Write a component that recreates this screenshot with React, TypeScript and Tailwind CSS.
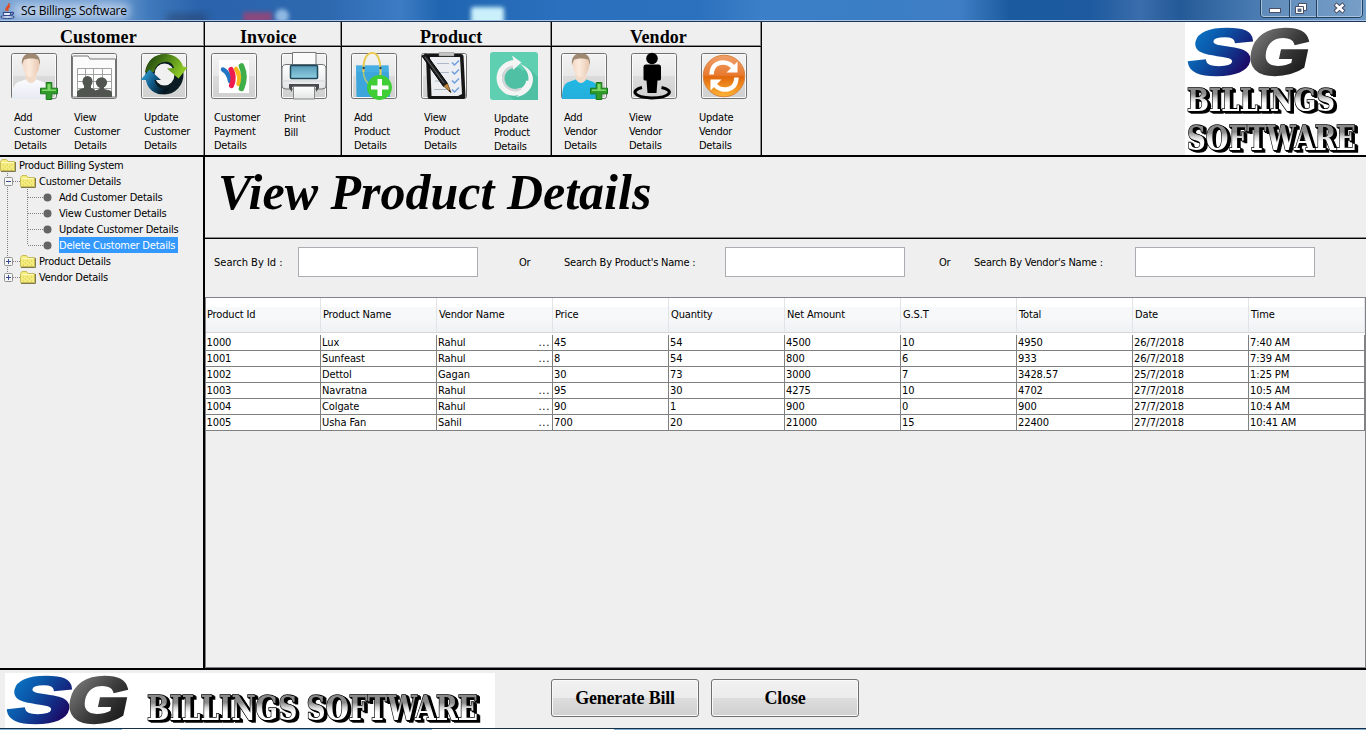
import React from "react";

const UI = "font-['DejaVu_Sans_Condensed','DejaVu_Sans',sans-serif] [font-stretch:condensed]";
const SERIF = "font-['Liberation_Serif',serif]";

function IconFrame({ id, children, bare }: { id: string; children: React.ReactNode; bare?: boolean }) {
  return (
    <svg width="48" height="48" viewBox="0 0 48 48" className="block shrink-0">
      <defs>
        <linearGradient id={id} x1="0" y1="0" x2="0" y2="1">
          <stop offset="0" stopColor="#f3f3f3" />
          <stop offset="0.5" stopColor="#e8e8e8" />
          <stop offset="0.5" stopColor="#dcdcdc" />
          <stop offset="1" stopColor="#cfcfcf" />
        </linearGradient>
      </defs>
      {!bare && (
        <>
          <rect x="1.5" y="1.5" width="45" height="45" rx="2" fill={"url(#" + id + ")"} stroke="#707070" />
          <rect x="2.5" y="2.5" width="43" height="43" rx="1" fill="none" stroke="#fafafa" />
        </>
      )}
      {children}
    </svg>
  );
}

function Person({ id, body, bodyDark }: { id: string; body: string; bodyDark: string }) {
  return (
    <IconFrame id={id}>
      <defs>
        <linearGradient id={id + "b"} x1="0" y1="0" x2="0" y2="1">
          <stop offset="0" stopColor={body} />
          <stop offset="1" stopColor={bodyDark} />
        </linearGradient>
        <linearGradient id={id + "f"} x1="0" y1="0" x2="1" y2="0">
          <stop offset="0" stopColor="#f3dac8" />
          <stop offset="0.4" stopColor="#fbeadc" />
          <stop offset="1" stopColor="#e8c8b0" />
        </linearGradient>
      </defs>
      <path d="M2 47C2 36 4 31 10 29.500L17 27H25L32 29.500C37 31 40 37 40 47Z" fill={"url(#" + id + "b)"} />
      <path d="M15.500 18H26.500V26.500C25 30 22.500 31 21 31C19 31 17 29.500 15.500 26.500Z" fill="#f2dac8" />
      <path d="M12.500 10C12.300 18 15.500 24.500 20.800 25C26.500 24.500 29.700 18 29.500 10C29 5 25 3 21 3C17 3 13 5 12.500 10Z" fill={"url(#" + id + "f)"} />
      <path d="M12 13C11 5 15 1.200 21 1.200C27 1.200 31 5 29.800 13C29 11 29 8.500 28 7.500C24 6 18 6 14.300 7.500C13.300 9 12.800 11 12 13Z" fill="#a08973" />
      <path d="M36.200 30.500H41.800V36.200H47.500V41.800H41.800V47.500H36.200V41.800H30.500V36.200H36.200Z" fill="#2f9a2a" stroke="#1b7a1b" />
      <path d="M37.500 32H40.500V37.500H46V39H32V37.500H37.500Z" fill="#7fd868" />
    </IconFrame>
  );
}

function FolderPeople() {
  return (
    <IconFrame id="fp">
      <path d="M2.500 45V5Q2.500 4 3.500 4H18L20 7H45.500V45Z" fill="#fbfbfb" stroke="#777" />
      <path d="M7.500 16.500H41.500V44.500H7.500ZM7.500 22.500H41.500M7.500 29.500H41.500M7.500 36.500H41.500M15.500 16.500V44M23.500 16.500V44M32.500 16.500V44" fill="#fff" stroke="#a2a2a2" />
      <g fill="#50554f">
        <ellipse cx="17.500" cy="29.500" rx="5" ry="5.500" />
        <path d="M7 45V41C7 37.500 11 37 14 36V31H21V36C24 37 26 37.500 26 41V45Z" />
        <ellipse cx="31.500" cy="30.500" rx="5.600" ry="5.200" />
        <path d="M24 45V41C24 38 27 38 29.500 37V32H34V37C38 38 42 38 42 41V45Z" />
      </g>
    </IconFrame>
  );
}

function SyncDark() {
  return (
    <IconFrame id="sd">
      <defs>
        <linearGradient id="sdg" x1="0" y1="0" x2="1" y2="0.4">
          <stop offset="0" stopColor="#14320a" />
          <stop offset="0.5" stopColor="#4c7f17" />
          <stop offset="1" stopColor="#8cc926" />
        </linearGradient>
        <linearGradient id="sdb" x1="0" y1="0" x2="1" y2="0.5">
          <stop offset="0" stopColor="#3bb2e8" />
          <stop offset="0.5" stopColor="#125f8e" />
          <stop offset="1" stopColor="#04141f" />
        </linearGradient>
      </defs>
      <ellipse cx="24.500" cy="22.500" rx="14.500" ry="15.500" fill="#f0f0f0" stroke="#0b1d22" strokeWidth="9" />
      <path d="M5 20C7 8 15 2 25 2C34 2 41 7 43 14.500L47.500 15.500L38.500 26.500L27 16.500L34 16C32 10 28 9.500 24 10C17 11 15 16 14 20Z" fill="url(#sdg)" />
      <path d="M0.500 28L9.500 17.500L21 28H14.500C16 36 22 38 30 35.500C25 43.500 20 43 16 41C10 38.500 7 34 6 28Z" fill="url(#sdb)" />
    </IconFrame>
  );
}

function Wallet() {
  return (
    <IconFrame id="wa">
      <rect x="9" y="8" width="30" height="33" fill="#fff" />
      <g fill="none" strokeLinecap="round">
        <path d="M26 17Q31 24 28.500 32" stroke="#f8b71b" strokeWidth="4.500" />
        <path d="M31.500 14Q36.500 25 31.500 36.500" stroke="#3fae49" strokeWidth="5.600" />
        <path d="M13 17.500Q19 21 20 29" stroke="#2177c4" strokeWidth="4.500" />
        <path d="M21 17.500Q25 25 21.500 33.500" stroke="#ee1b4c" strokeWidth="5.200" />
      </g>
    </IconFrame>
  );
}

function Printer() {
  return (
    <IconFrame id="pr">
      <defs>
        <linearGradient id="prp" x1="0" y1="0" x2="0" y2="1">
          <stop offset="0" stopColor="#5799b5" />
          <stop offset="1" stopColor="#8fd0e2" />
        </linearGradient>
        <linearGradient id="prw" x1="0" y1="0" x2="0" y2="1">
          <stop offset="0" stopColor="#fff" />
          <stop offset="1" stopColor="#e2e4e5" />
        </linearGradient>
      </defs>
      <path d="M12.500 13V0.500H36V13Z" fill="#fafafa" stroke="#777" />
      <path d="M2 17Q2 12.500 6 12.500H42Q46 12.500 46 17V34Q46 37 42 37H6Q2 37 2 34Z" fill="url(#prw)" stroke="#707477" />
      <path d="M2 29H46" stroke="#d0d4d5" />
      <rect x="10.500" y="13.500" width="27" height="13" rx="1" fill="url(#prp)" stroke="#1d4658" strokeWidth="1.500" />
      <path d="M9 32H39V36L36 40V35H12V40L9 36Z" fill="#484c4e" />
      <path d="M13.500 34.500H34.500V47H13.500Z" fill="url(#prw)" stroke="#888" />
    </IconFrame>
  );
}

function Bag() {
  return (
    <IconFrame id="bg">
      <path d="M6 13.500H38.500L40 45H6.500Z" fill="#3ba5dc" />
      <path d="M6 13.500H38.500V20H6Z" fill="#4db4e6" opacity="0.600" />
      <path d="M13.500 15V22Q15 30 20 32.500" fill="none" stroke="#a9c878" strokeWidth="1.500" />
      <path d="M13.500 20C13 8 16 1 22.500 1C28 1 31 8 30.500 24" fill="none" stroke="#e8cb52" strokeWidth="2" />
      <circle cx="13.700" cy="16" r="1.200" fill="#246" />
      <circle cx="30.500" cy="16" r="1.200" fill="#246" />
      <circle cx="29.500" cy="35.500" r="12.400" fill="#3fce35" />
      <path d="M27.500 27H32V33.500H38.500V37.500H32V44H27.500V37.500H21V33.500H27.500Z" fill="#fff" />
    </IconFrame>
  );
}

function Clipboard() {
  return (
    <IconFrame id="cl">
      <path d="M6 4Q6 2 8 2H41Q43 2 43.500 4L45.500 44Q45.500 47 43 47H10Q7.500 47 7.500 44Z" fill="#161616" />
      <path d="M10 5H40L42 42L38 44H11.500Z" fill="#eceef1" />
      <path d="M19 0.500H34V4H19Z" fill="#c4c4c4" stroke="#888" strokeWidth="0.500" />
      <path d="M17 11.500H29M18 20.500H29M15 29H25M14 37.500H30" stroke="#aeb8c4" strokeWidth="1" />
      <path d="M32 10.500L34.500 13L39 8.500M32 19.500L34.500 22L39 17.500M32 28.500L34.500 31L39 26.500M32 37.500L34.500 40L39 35.500" fill="none" stroke="#6c9fe0" strokeWidth="1.400" />
      <path d="M2 4L6 2L27.500 31.500L23.500 34.500Z" fill="#1e1e20" stroke="#000" />
      <path d="M5 5L24 31" stroke="#777" strokeWidth="0.800" />
      <path d="M23.500 34L27.500 31.500L31 40.500Z" fill="#c4883f" stroke="#513413" strokeWidth="0.700" />
      <path d="M29.500 38L31 40.500L28.500 39Z" fill="#000" />
    </IconFrame>
  );
}

function RefreshTeal() {
  return (
    <IconFrame id="rt" bare>
      <rect width="48" height="48" rx="3" fill="#5fcfb2" />
      <path d="M31 8L48 25V48H24L10 37L38 15Z" fill="#4fc0a3" />
      <circle cx="24" cy="26" r="11" fill="#4fc0a3" />
      <path d="M24.500 11A15 15 0 1 0 39 29" fill="none" stroke="#f4f4f4" strokeWidth="5.500" />
      <path d="M25.500 14.500A11.800 11.800 0 1 0 31 36.500" fill="none" stroke="#d3d5d7" strokeWidth="2.500" />
      <path d="M30 12C38 15 43 20 43 27C43 36 36 44 26 45C34 40 38 34 38.500 27C38.500 20 35 16 30 12Z" fill="#f4f4f4" />
      <path d="M22 3.500L31.500 10.500L23 18V14.500L21 8.500H23.500Z" fill="#f4f4f4" />
    </IconFrame>
  );
}

function Standing() {
  return (
    <IconFrame id="st">
      <path d="M12 35.500C1 38 2 45 21.500 46C42 45.500 44 38 31.500 35.500" fill="none" stroke="#000" strokeWidth="3" />
      <circle cx="22" cy="6.500" r="5.800" />
      <path d="M13.500 15Q13.500 12.500 16 12.500H28.500Q31 12.500 31 15V27Q31 28.500 29 28.500H27.500L26.500 41H17.500L16.500 28.500H15Q13.500 28.500 13.500 27Z" />
    </IconFrame>
  );
}

function SyncOrange() {
  return (
    <IconFrame id="so">
      <defs>
        <linearGradient id="sog" x1="0" y1="0" x2="0" y2="1">
          <stop offset="0" stopColor="#f0a06a" />
          <stop offset="0.480" stopColor="#e87a30" />
          <stop offset="0.520" stopColor="#e2680c" />
          <stop offset="1" stopColor="#fdb436" />
        </linearGradient>
      </defs>
      <circle cx="24" cy="24" r="20.800" fill="url(#sog)" stroke="#d9843f" />
      <path d="M11.500 22.500C12 8 27 8 33 15M36.500 25.500C36 40 21 40 15 33" fill="none" stroke="#fff" strokeWidth="4.600" />
      <path d="M37.500 9.500V20.500H26.500ZM10.500 38.500V27.500H21.500Z" fill="#fff" />
    </IconFrame>
  );
}

function Tool({ icon, lines, cls, labelCls }: { icon: React.ReactNode; lines: string[]; cls: string; labelCls: string }) {
  return (
    <div className={"shrink-0 " + cls}>
      {icon}
      <div className={"whitespace-nowrap text-[11px] leading-[14px] tracking-[-0.250px] " + labelCls}>
        {lines.map((l) => (
          <div key={l}>{l}</div>
        ))}
      </div>
    </div>
  );
}

function Section({ title, cls, headCls, bodyCls, children }: { title: string; cls: string; headCls: string; bodyCls: string; children: React.ReactNode }) {
  return (
    <section className={"flex shrink-0 flex-col border-r border-black shadow-[inset_-1px_0_#8a8a8a] " + cls}>
      <h2 className={"h-[25px] shrink-0 whitespace-nowrap border-b border-black pt-[6px] text-[18px] font-bold leading-[18px] tracking-[0.100px] shadow-[inset_0_-1px_#8a8a8a] " + SERIF + " " + headCls}>
        {title}
      </h2>
      <div className={"flex pt-[5px] " + bodyCls}>{children}</div>
    </section>
  );
}

function SgMark({ id }: { id: string }) {
  return (
    <>
      <defs>
        <linearGradient id={id + "s"} x1="0" y1="0" x2="1" y2="0.600">
          <stop offset="0" stopColor="#0a7fd0" />
          <stop offset="0.450" stopColor="#0b56a8" />
          <stop offset="1" stopColor="#1b0a66" />
        </linearGradient>
        <linearGradient id={id + "g"} x1="0" y1="0" x2="1" y2="0.800">
          <stop offset="0" stopColor="#8a8a8a" />
          <stop offset="0.600" stopColor="#3a3a3a" />
          <stop offset="1" stopColor="#161616" />
        </linearGradient>
      </defs>
      <g transform="translate(10 0) skewX(-12)" className="font-['Liberation_Sans',sans-serif] font-bold [font-stretch:normal]" fontSize="64" letterSpacing="0" strokeWidth="3">
        <text x="-3" y="46.500" textLength="64" lengthAdjust="spacingAndGlyphs" fill={"url(#" + id + "s)"} stroke={"url(#" + id + "s)"}>S</text>
        <text x="57" y="46.500" textLength="61" lengthAdjust="spacingAndGlyphs" fill={"url(#" + id + "g)"} stroke={"url(#" + id + "g)"}>G</text>
      </g>
    </>
  );
}

function Western({ id, x, y, w, size, children }: { id: string; x: number; y: number; w: number; size: number; children: string }) {
  return (
    <>
      <defs>
        <linearGradient id={id} x1="0" y1="0" x2="0" y2="1">
          <stop offset="0.350" stopColor="#8a8a8a" />
          <stop offset="0.480" stopColor="#d8d8d8" />
          <stop offset="0.600" stopColor="#ffffff" />
        </linearGradient>
      </defs>
      <text
        x={x}
        y={y}
        textLength={w}
        lengthAdjust="spacingAndGlyphs"
        fontSize={size}
        letterSpacing="0"
        fill={"url(#" + id + ")"}
        stroke="#000"
        strokeWidth="1.600"
        paintOrder="stroke"
        className="font-['DejaVu_Serif',serif] font-bold [filter:drop-shadow(1px_1px_0_#000)_drop-shadow(2px_1px_0_#000)] [font-stretch:normal]"
      >
        {children}
      </text>
    </>
  );
}

function Folder() {
  return (
    <svg width="16" height="13" viewBox="0 0 16 13" className="block shrink-0">
      <path d="M0.500 11.500V2.500L2 0.500H6.500L8 2.500H14.500V11.500Z" fill="#f3ec7c" stroke="#c9bd5b" />
      <path d="M1 12.500H15.500V3" fill="none" stroke="#7f7a4e" />
      <path d="M1.500 3.500H13.500" stroke="#fffbc0" />
      <path d="M3 6h1M7 6h1M11 6h1M5 8h1M9 8h1M3 10h1M7 10h1M11 10h1" stroke="#d6c94e" />
    </svg>
  );
}

function Branch({ open, last }: { open: boolean; last?: boolean }) {
  return (
    <svg width="20" height="16" viewBox="0 0 20 16" className="block shrink-0">
      <path d={last ? "M7.500 0V8" : "M7.500 0V16"} stroke="#808080" strokeDasharray="1 1" />
      <path d="M13 8.500H20" stroke="#808080" strokeDasharray="1 1" />
      <rect x="4.500" y="4.500" width="8" height="8" rx="1" fill="#f6f6f6" stroke="#919191" />
      <path d={open ? "M6 8.500H11" : "M6 8.500H11M8.500 6V11"} stroke="#3c4f9f" />
    </svg>
  );
}

function Leaf({ label, last, selected }: { label: string; last?: boolean; selected?: boolean }) {
  return (
    <li className="flex h-4 items-center">
      <svg width="58" height="16" viewBox="0 0 58 16" className="block shrink-0">
        <path d="M7.500 0V16" stroke="#808080" strokeDasharray="1 1" />
        <path d={last ? "M27.500 0V8" : "M27.500 0V16"} stroke="#808080" strokeDasharray="1 1" />
        <path d="M28 8.500H43" stroke="#808080" strokeDasharray="1 1" />
        <circle cx="47.500" cy="8.500" r="4" fill="#646464" />
      </svg>
      <span className={selected ? "ml-px h-[16px] w-[119px] bg-[#3399ff] pt-px leading-[15px] text-white" : "ml-px pt-px leading-[15px]"}>{label}</span>
    </li>
  );
}

function Group({ label, open, last }: { label: string; open: boolean; last?: boolean }) {
  return (
    <li className="flex h-4 items-center">
      <Branch open={open} last={last} />
      <Folder />
      <span className="ml-[3px] pt-px leading-[15px]">{label}</span>
    </li>
  );
}

const COLUMNS = ["Product Id", "Product Name", "Vendor Name", "Price", "Quantity", "Net Amount", "G.S.T", "Total", "Date", "Time"];
const ROWS = [
  ["1000", "Lux", "Rahul", "45", "54", "4500", "10", "4950", "26/7/2018", "7:40 AM"],
  ["1001", "Sunfeast", "Rahul", "8", "54", "800", "6", "933", "26/7/2018", "7:39 AM"],
  ["1002", "Dettol", "Gagan", "30", "73", "3000", "7", "3428.57", "25/7/2018", "1:25 PM"],
  ["1003", "Navratna", "Rahul", "95", "30", "4275", "10", "4702", "27/7/2018", "10:5 AM"],
  ["1004", "Colgate", "Rahul", "90", "1", "900", "0", "900", "27/7/2018", "10:4 AM"],
  ["1005", "Usha Fan", "Sahil", "700", "20", "21000", "15", "22400", "27/7/2018", "10:41 AM"],
];
const GRID = "grid grid-cols-[115px_repeat(8,116px)_116px]";

function Field() {
  return <input className="h-[30px] w-[180px] shrink-0 border border-[#abadb3] bg-white px-1 outline-none" />;
}

function PushButton({ children }: { children: string }) {
  return (
    <button className={"h-[38px] w-[148px] rounded-[3px] border border-[#707070] bg-[linear-gradient(#f2f2f2,#ebebeb_50%,#dddddd_50%,#cfcfcf)] text-[18px] font-bold leading-none shadow-[inset_0_0_0_1px_#fafafa] " + SERIF}>
      {children}
    </button>
  );
}

function TitleBar() {
  return (
    <header className="relative flex h-[22px] shrink-0 justify-between overflow-hidden border-b border-[#1d3556] bg-[linear-gradient(90deg,#7ba4d4_0,#6f9cd1_110px,#3f79bb_150px,#2a63ab_200px,#2e69b0_330px,#3c7cc4_400px,#2065b0_440px,#2a70be_560px,#2c71bd_700px,#3b7fc8_760px,#3a7ec6_860px,#3f7ec4_960px,#1c5a9f_1010px,#1d5a9f_1090px,#3a6dab_1140px,#235a97_1180px,#4779b0_1250px,#6f9ac6_1366px)] shadow-[inset_0_-1px_#a9c3e4]">
      <svg width="620" height="20" viewBox="0 0 620 20" className="absolute left-0 top-0">
        <defs>
          <filter id="soft" x="-50%" y="-80%" width="200%" height="260%">
            <feGaussianBlur stdDeviation="4" />
          </filter>
          <filter id="soft2" x="-50%" y="-80%" width="200%" height="260%">
            <feGaussianBlur stdDeviation="2" />
          </filter>
        </defs>
        <rect x="14" y="4" width="115" height="14" fill="#c6d8ee" filter="url(#soft)" opacity="0.800" />
        <rect x="167" y="15" width="40" height="7" fill="#26324f" filter="url(#soft)" opacity="0.600" />
        <ellipse cx="282" cy="16" rx="7" ry="7" fill="#a9cdf0" filter="url(#soft2)" opacity="0.800" />
        <rect x="243" y="12" width="29" height="11" fill="#a8406f" filter="url(#soft2)" opacity="0.750" />
        <rect x="471" y="7" width="33" height="18" rx="3" fill="#c9f0fb" filter="url(#soft2)" />
      </svg>
      <div className="relative flex">
        <svg width="16" height="16" viewBox="0 0 16 16" className="mt-[3px] block">
          <path d="M9 0C10 3 5 4 6 8M10 3C8 4 7 5 8 8" fill="none" stroke="#e04a1c" strokeWidth="1.500" />
          <path d="M3 9.500H11L10 12.500H4Z" fill="#e6ecfa" stroke="#2f4488" />
          <path d="M11 9.500C15 8.500 14 12 10.500 12" fill="none" stroke="#2f4488" strokeWidth="1.200" />
          <ellipse cx="7.500" cy="14" rx="7" ry="1.500" fill="#c9d5f1" stroke="#2f4488" />
        </svg>
        <span className="ml-[5px] mt-[3px] whitespace-nowrap font-['Open_Sans','Noto_Sans',sans-serif] text-[12px] leading-4 tracking-[-0.250px] text-black [font-stretch:normal]">SG Billings Software</span>
      </div>
      <svg width="106" height="20" viewBox="0 0 106 20" className="relative block">
        <path d="M0.500 0V14Q0.500 17.500 4 17.500H99Q102.500 17.500 102.500 14V0" fill="#86a8cc" fillOpacity="0.350" stroke="#22405f" />
        <path d="M1.500 0V14Q1.500 16.500 4 16.500H99Q101.500 16.500 101.500 14V0M30.500 0V16M57.500 0V16" fill="none" stroke="#b6cde4" strokeOpacity="0.800" />
        <path d="M29.500 0V17M56.500 0V17" stroke="#22405f" />
        <rect x="9.500" y="8.500" width="11" height="4" fill="#fff" stroke="#4a4f66" />
        <path d="M38.500 3.500H46.500V10.500H38.500Z" fill="#fff" stroke="#4a4f66" />
        <path d="M35.500 6.500H43.500V13.500H35.500Z" fill="#fff" stroke="#4a4f66" />
        <rect x="38" y="9" width="3" height="2.500" fill="#5c7ba0" stroke="#4a4f66" strokeWidth="0.800" />
        <path d="M75 4L84 12M84 4L75 12" stroke="#4a4f66" strokeWidth="4.500" />
        <path d="M75.700 4.500L83.300 11.500M83.300 4.500L75.700 11.500" stroke="#fff" strokeWidth="2.400" />
      </svg>
    </header>
  );
}

export default function App() {
  return (
    <div className={"flex h-[730px] w-[1366px] flex-col overflow-hidden bg-[#efefef] text-[11px] tracking-[-0.220px] text-black " + UI}>
      <TitleBar />

      <div className="flex h-[135px] shrink-0 border-b-2 border-black">
        <Section title="Customer" cls="w-[205px]" headCls="pl-[60px]" bodyCls="pl-[10px]">
          <Tool icon={<Person id="pc" body="#fbfcfe" bodyDark="#e6eaf2" />} lines={["Add", "Customer", "Details"]} cls="w-[60px]" labelCls="pl-1 pt-[11px]" />
          <Tool icon={<FolderPeople />} lines={["View", "Customer", "Details"]} cls="w-[70px]" labelCls="pl-1 pt-[11px]" />
          <Tool icon={<SyncDark />} lines={["Update", "Customer", "Details"]} cls="w-[60px]" labelCls="pl-1 pt-[11px]" />
        </Section>
        <Section title="Invoice" cls="w-[137px]" headCls="pl-[35px]" bodyCls="pl-[5px]">
          <Tool icon={<Wallet />} lines={["Customer", "Payment", "Details"]} cls="w-[70px]" labelCls="pl-1 pt-[11px]" />
          <Tool icon={<Printer />} lines={["Print", "Bill"]} cls="w-[50px]" labelCls="pl-1 pt-[12px]" />
        </Section>
        <Section title="Product" cls="w-[210px]" headCls="pl-[78px]" bodyCls="pl-[8px]">
          <Tool icon={<Bag />} lines={["Add", "Product", "Details"]} cls="w-[70px]" labelCls="pl-1 pt-[11px]" />
          <Tool icon={<Clipboard />} lines={["View", "Product", "Details"]} cls="w-[70px]" labelCls="pl-1 pt-[11px]" />
          <Tool icon={<RefreshTeal />} lines={["Update", "Product", "Details"]} cls="w-[50px]" labelCls="pl-1 pt-[12px]" />
        </Section>
        <Section title="Vendor" cls="w-[210px]" headCls="pl-[78px]" bodyCls="pl-[8px]">
          <Tool icon={<Person id="pv" body="#22b8e4" bodyDark="#25aedb" />} lines={["Add", "Vendor", "Details"]} cls="w-[70px]" labelCls="pl-1 pt-[11px]" />
          <Tool icon={<Standing />} lines={["View", "Vendor", "Details"]} cls="w-[70px]" labelCls="-ml-px pt-[11px]" />
          <Tool icon={<SyncOrange />} lines={["Update", "Vendor", "Details"]} cls="w-[50px]" labelCls="-ml-px pt-[11px]" />
        </Section>
        <svg width="181" height="133" viewBox="0 0 181 133" className="ml-auto block overflow-visible bg-white">
          <g transform="translate(3 5)"><SgMark id="top" /></g>
          <Western id="w1" x={2} y={88.5} w={148} size={32}>BILLINGS</Western>
          <Western id="w2" x={2} y={128} w={169} size={34}>SOFTWARE</Western>
        </svg>
      </div>

      <div className="flex h-[511px] shrink-0">
        <ul className="w-[205px] shrink-0 whitespace-nowrap border-r-2 border-black">
          <li className="flex h-4 items-center">
            <Folder />
            <span className="ml-[3px] pt-px leading-[15px] tracking-[-0.300px]">Product Billing System</span>
          </li>
          <Group label="Customer Details" open />
          <Leaf label="Add Customer Details" />
          <Leaf label="View Customer Details" />
          <Leaf label="Update Customer Details" />
          <Leaf label="Delete Customer Details" last selected />
          <Group label="Product Details" open={false} />
          <Group label="Vendor Details" open={false} last />
        </ul>

        <main className="flex w-[1161px] flex-col">
          <h1 className={"h-[82px] shrink-0 whitespace-nowrap border-b border-black pl-[13px] pt-[7px] text-[50px] font-bold italic leading-[56px] tracking-normal shadow-[inset_0_-1px_#8a8a8a] " + SERIF}>
            View Product Details
          </h1>
          <div className="flex h-[58px] shrink-0 items-start whitespace-nowrap pl-[9px] pt-2 leading-[31px]">
            <label className="w-[84px] shrink-0 tracking-[0px]">Search By Id :</label>
            <Field />
            <span className="ml-[41px] w-[45px] shrink-0">Or</span>
            <label className="w-[161px] shrink-0">Search By Product's Name :</label>
            <Field />
            <span className="ml-[34px] w-[35px] shrink-0">Or</span>
            <label className="w-[161px] shrink-0">Search By Vendor's Name :</label>
            <Field />
          </div>
          <div className="flex flex-1 flex-col border border-[#82828a]">
            <div className={"h-[37px] shrink-0 bg-white tracking-[-0.150px] " + GRID}>
              {COLUMNS.map((c, i) => (
                <div key={c} className={"h-[35px] border-b border-r border-[#d5d5d5] border-r-[#e2e3e6] bg-[linear-gradient(#ffffff_9px,#f7f8fa_9px,#f7f8fa_20px,#f0f1f3)] pt-[1px] leading-[32px] " + (i ? "pl-[2px]" : "pl-[1px]")}>
                  {c}
                </div>
              ))}
            </div>
            {ROWS.map((r) => (
              <div key={r[0]} className={"h-4 shrink-0 bg-white tracking-[-0.100px] " + GRID}>
                {r.map((v, i) => (
                  <div key={i} className={"flex justify-between border-b border-r border-[#808080] leading-[15px] " + (i ? "pl-px" : "pl-[0.5px]")}>
                    <span>{v}</span>
                    {i === 2 && v !== "Gagan" && <span className="pr-[2px] tracking-[0.700px]">...</span>}
                  </div>
                ))}
              </div>
            ))}
          </div>
        </main>
      </div>

      <footer className="flex h-[60px] shrink-0 border-t-2 border-black pl-[5px]">
        <svg width="490" height="55" viewBox="0 0 490 55" className="mt-[3px] block shrink-0 overflow-visible bg-white">
          <g transform="translate(2 2)"><SgMark id="bot" /></g>
          <Western id="w3" x={142} y={47} w={331} size={33}>BILLINGS SOFTWARE</Western>
        </svg>
        <div className="ml-[56px] flex gap-3 pt-[9px]">
          <PushButton>Generate Bill</PushButton>
          <PushButton>Close</PushButton>
        </div>
      </footer>
      <div className="flex h-[2px] shrink-0 flex-col">
        <div className="h-px bg-[#16304a]" />
        <div className="h-px bg-[linear-gradient(90deg,#7fb4d6_122px,#ffffff_122px,#ffffff_180px,#7fb4d6_180px,#7fb4d6_432px,#ffffff_432px,#ffffff_614px,#7fa9cc_614px)]" />
      </div>
    </div>
  );
}
